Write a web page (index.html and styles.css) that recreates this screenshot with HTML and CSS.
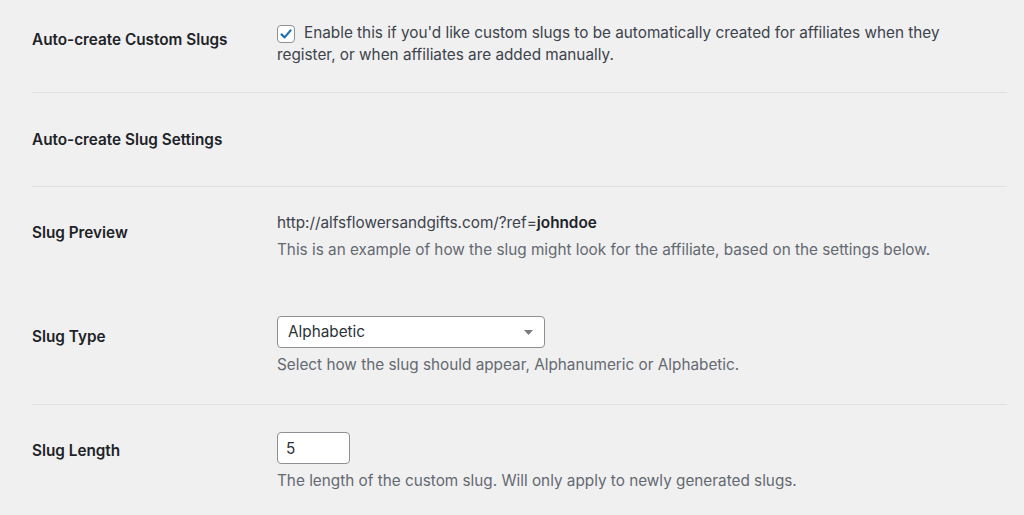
FILE: index.html
```html
<!DOCTYPE html>
<html lang="en">
<head>
  <meta charset="UTF-8" />
  <meta name="viewport" content="width=device-width, initial-scale=1.0"/>
  <title>Affiliate Slug Settings</title>
  <link rel="stylesheet" href="styles.css">
</head>
<body>
  <div class="form-table">
    <div class="row first">
      <div class="row-label">Auto-create Custom Slugs</div>
      <div class="row-field">
        <label class="check-line">
          <span class="checkbox">
            <svg width="14" height="14" viewBox="0 0 14 14"><path d="M2.5 7.4 L5.6 10.4 L11.6 3.4" fill="none" stroke="#2271b1" stroke-width="2.2" stroke-linecap="round" stroke-linejoin="round"/></svg>
          </span>Enable this if you'd like custom slugs to be automatically created for affiliates when they register, or when affiliates are added manually.
        </label>
      </div>
    </div>

    <div class="row heading">
      <div class="row-label">Auto-create Slug Settings</div>
      <div class="row-field"></div>
    </div>

    <div class="row no-line">
      <div class="row-label">Slug Preview</div>
      <div class="row-field">
        <div class="preview">http://alfsflowersandgifts.com/?ref=<strong>johndoe</strong></div>
        <p class="description">This is an example of how the slug might look for the affiliate, based on the settings below.</p>
      </div>
    </div>

    <div class="row">
      <div class="row-label">Slug Type</div>
      <div class="row-field">
        <div class="select">
          <span>Alphabetic</span>
          <svg width="9" height="5" viewBox="0 0 9 5"><path d="M0 0 H9 L4.5 5 Z" fill="#787c82"/></svg>
        </div>
        <p class="description">Select how the slug should appear, Alphanumeric or Alphabetic.</p>
      </div>
    </div>

    <div class="row last">
      <div class="row-label">Slug Length</div>
      <div class="row-field">
        <div class="number-input">5</div>
        <p class="description">The length of the custom slug. Will only apply to newly generated slugs.</p>
      </div>
    </div>
  </div>
</body>
</html>
```

FILE: styles.css
```css
* {
  margin: 0;
  padding: 0;
  box-sizing: border-box;
}
body {
  background: #f0f0f1;
  font-family: Inter, "Noto Sans", sans-serif;
  font-size: 15.3px;
  line-height: 22px;
  color: #3c434a;
}
.form-table {
  margin: 0 17px 0 32px;
}
.row {
  display: grid;
  grid-template-columns: 245px 1fr;
  border-bottom: 1px solid #e0e0e2;
}
.row.no-line,
.row.last {
  border-bottom: none;
}
.row-label {
  padding: 35px 0;
  font-weight: 600;
  color: #1d2327;
}
.row-field {
  padding: 25px 10px 28px 0;
}
.row.no-line .row-field {
  padding-bottom: 30px;
}
.row.first .row-label {
  padding-top: 29px;
}
.row.first .row-field {
  padding-top: 22px;
  padding-bottom: 26px;
}
.row.heading .row-label {
  padding-top: 36px;
}
.check-line {
  display: block;
}
.checkbox {
  display: inline-flex;
  align-items: center;
  justify-content: center;
  width: 18px;
  height: 18px;
  margin: 0 9px 0 0;
  vertical-align: -3px;
  background: #fff;
  border: 1px solid #8c8f94;
  border-radius: 4px;
}
.preview {
  color: #3c434a;
}
.preview strong {
  color: #1d2327;
  font-weight: 600;
}
.description {
  margin-top: 5px;
  color: #646970;
}
.select {
  display: flex;
  justify-content: space-between;
  align-items: center;
  width: 268px;
  height: 32px;
  padding: 0 11px 0 10px;
  background: #fff;
  border: 1px solid #8c8f94;
  border-radius: 4px;
  color: #2c3338;
}
.number-input {
  width: 73px;
  height: 32px;
  margin-top: 2px;
  padding: 5px 8px;
  background: #fff;
  border: 1px solid #8c8f94;
  border-radius: 4px;
  color: #2c3338;
}
.select + .description,
.number-input + .description {
  margin-top: 6px;
}
```
